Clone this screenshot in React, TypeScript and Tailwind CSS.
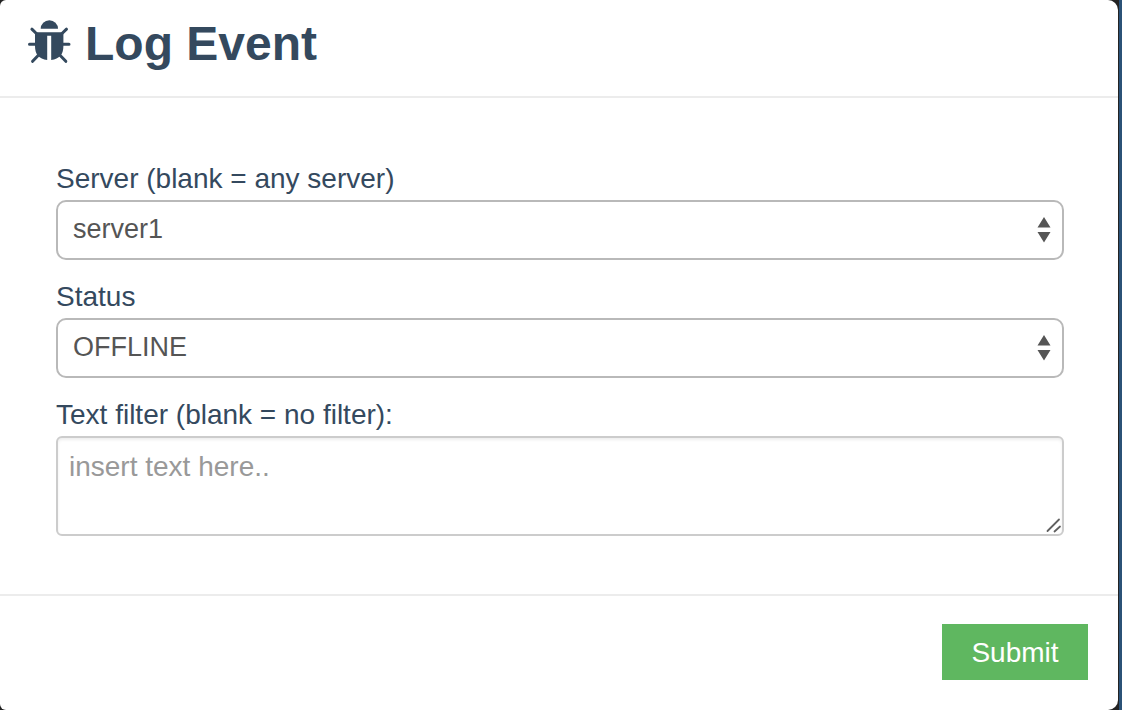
import { useState } from "react";

function BugIcon() {
  return (
    <svg viewBox="0 0 44 48" className="h-12 w-11 shrink-0" fill="#34495e" aria-hidden="true">
      <path d="M13.700 8.800a8.650 8.600 0 0 1 17.300 0z" />
      <path d="M8 12.200H36.400V26c0 8.500-4 13-12.200 14V15.700h-4V40C12 39 8 34.500 8 26z" />
      <path
        d="M4.900 9.200l5 4.800M39.500 9.200l-5 4.800M2.500 24.300H10M42 24.300H34M5.600 41.300l7-7.300M38.800 41.300l-7-7.300"
        fill="none"
        stroke="#34495e"
        strokeWidth="3"
        strokeLinecap="round"
      />
    </svg>
  );
}

function SelectField({ id, label, options }: { id: string; label: string; options: string[] }) {
  const [value, setValue] = useState(options[1]);
  return (
    <div>
      <label htmlFor={id} className="block text-[28px] leading-[42px]">
        {label}
      </label>
      <div className="relative">
        <select
          id={id}
          value={value}
          onChange={(e) => setValue(e.target.value)}
          className="block h-[60px] w-full appearance-none rounded-[10px] border-2 border-[#b9b9b9] bg-white pr-12 pb-0.5 pl-[15px] text-[27px] text-[#555555]"
        >
          {options.map((option) => (
            <option key={option} value={option}>
              {option}
            </option>
          ))}
        </select>
        <svg
          viewBox="0 0 14 26"
          className="pointer-events-none absolute top-[17px] right-[13px] h-[26px] w-3.5"
          fill="#555555"
          aria-hidden="true"
        >
          <path d="M7 0l6.500 10.500H.500zM.500 15h13L7 25.500z" />
        </svg>
      </div>
    </div>
  );
}

export default function App() {
  return (
    <div className="min-h-screen border-r-3 border-[#2b5277] bg-[#222222] pr-px font-['Liberation_Sans',Arial,sans-serif] text-[#34495e]">
      <form
        className="flex min-h-screen flex-col rounded-l-[6px] rounded-r-[10px] bg-white"
        onSubmit={(e) => e.preventDefault()}
      >
        <header className="flex items-center gap-3.5 border-b-2 border-[#ececec] pt-4 pb-6 pl-[27px]">
          <BugIcon />
          <h1 className="text-5xl leading-14 font-bold">Log Event</h1>
        </header>

        <main className="flex flex-1 flex-col gap-4 pt-15 pr-[54px] pb-[58px] pl-14">
          <SelectField id="server" label="Server (blank = any server)" options={["", "server1"]} />
          <SelectField id="status" label="Status" options={["", "OFFLINE", "ONLINE"]} />
          <div>
            <label htmlFor="filter" className="block text-[28px] leading-[42px]">
              Text filter (blank = no filter):
            </label>
            <div className="relative">
              <textarea
                id="filter"
                placeholder="insert text here.."
                className="block h-[100px] w-full resize-none rounded-[6px] border-2 border-[#cccccc] bg-white px-[11px] py-2 text-[28px] leading-[42px] text-[#555555] shadow-[inset_0_2px_3px_rgba(0,0,0,0.07)] placeholder:text-[#999999]"
              />
              <svg
                viewBox="0 0 16 16"
                className="pointer-events-none absolute right-0.5 bottom-0.5 size-4"
                fill="none"
                stroke="#606060"
                strokeWidth="1.800"
                strokeLinecap="round"
                aria-hidden="true"
              >
                <path d="M1.500 13L13 1.500M8.500 13.500L14 8.500" />
              </svg>
            </div>
          </div>
        </main>

        <footer className="flex justify-end border-t-2 border-[#ececec] pt-7 pr-[30px] pb-[30px]">
          <button
            type="submit"
            className="h-14 min-w-[146px] bg-[#5fb760] px-7 pt-0.5 text-[28px] leading-10 text-white"
          >
            Submit
          </button>
        </footer>
      </form>
    </div>
  );
}
